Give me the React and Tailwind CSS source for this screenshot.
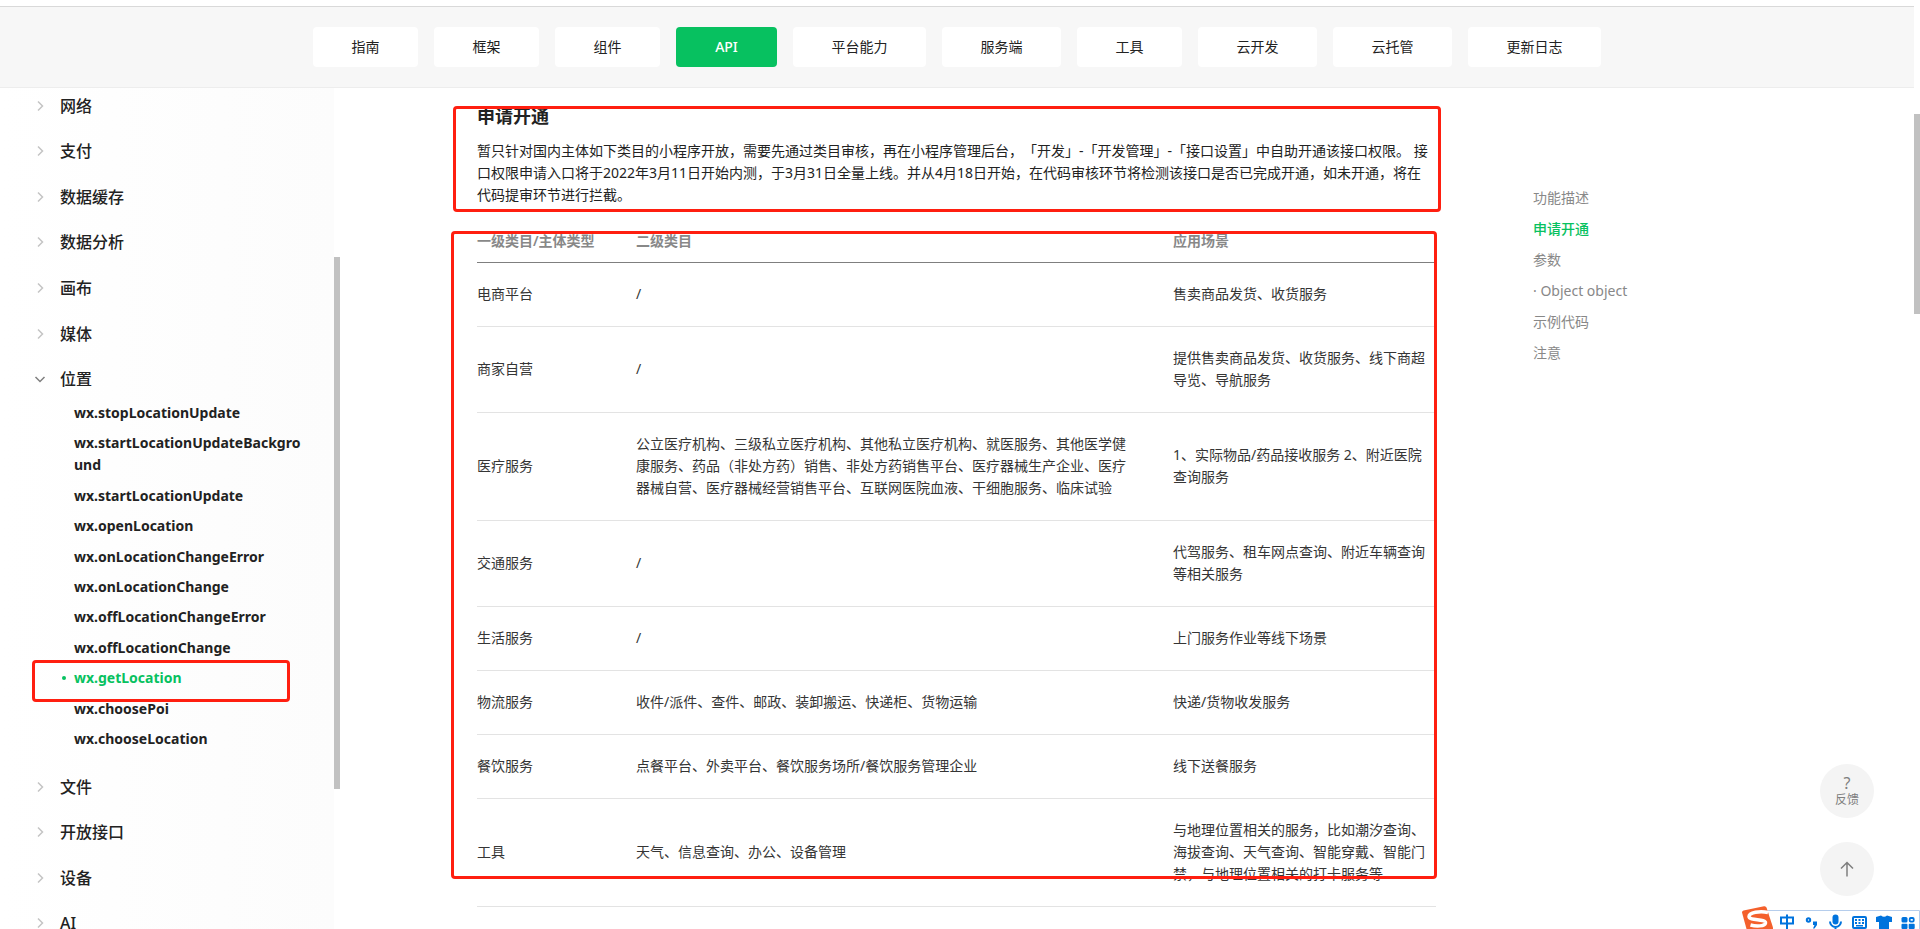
const navItems = [
  { label: '指南', width: 'w-[105px]' },
  { label: '框架', width: 'w-[105px]' },
  { label: '组件', width: 'w-[105px]' },
  { label: 'API', width: 'w-[101px]', active: true },
  { label: '平台能力', width: 'w-[133px]' },
  { label: '服务端', width: 'w-[119px]' },
  { label: '工具', width: 'w-[105px]' },
  { label: '云开发', width: 'w-[119px]' },
  { label: '云托管', width: 'w-[119px]' },
  { label: '更新日志', width: 'w-[133px]' },
];

const groupsBefore = ['网络', '支付', '数据缓存', '数据分析', '画布', '媒体', '位置'];
const groupsAfter = ['文件', '开放接口', '设备', 'AI'];

const locationApis = [
  'wx.stopLocationUpdate',
  'wx.startLocationUpdateBackground',
  'wx.startLocationUpdate',
  'wx.openLocation',
  'wx.onLocationChangeError',
  'wx.onLocationChange',
  'wx.offLocationChangeError',
  'wx.offLocationChange',
  'wx.getLocation',
  'wx.choosePoi',
  'wx.chooseLocation',
];

const rows = [
  ['电商平台', '/', '售卖商品发货、收货服务'],
  ['商家自营', '/', '提供售卖商品发货、收货服务、线下商超导览、导航服务'],
  [
    '医疗服务',
    '公立医疗机构、三级私立医疗机构、其他私立医疗机构、就医服务、其他医学健康服务、药品（非处方药）销售、非处方药销售平台、医疗器械生产企业、医疗器械自营、医疗器械经营销售平台、互联网医院血液、干细胞服务、临床试验',
    '1、实际物品/药品接收服务 2、附近医院查询服务',
  ],
  ['交通服务', '/', '代驾服务、租车网点查询、附近车辆查询等相关服务'],
  ['生活服务', '/', '上门服务作业等线下场景'],
  ['物流服务', '收件/派件、查件、邮政、装卸搬运、快递柜、货物运输', '快递/货物收发服务'],
  ['餐饮服务', '点餐平台、外卖平台、餐饮服务场所/餐饮服务管理企业', '线下送餐服务'],
  [
    '工具',
    '天气、信息查询、办公、设备管理',
    '与地理位置相关的服务，比如潮汐查询、海拔查询、天气查询、智能穿戴、智能门禁，与地理位置相关的打卡服务等',
  ],
];

const toc = ['功能描述', '申请开通', '参数', '· Object object', '示例代码', '注意'];

function Chevron({ open }) {
  return (
    <svg
      className={open ? 'h-3 w-3 rotate-90 text-[#7f7f7f]' : 'h-3 w-3 text-[#c4c4c4]'}
      viewBox="0 0 12 12"
      fill="none"
      stroke="currentColor"
      strokeWidth="1.5"
    >
      <path d="M4 1.5 8.5 6 4 10.5" />
    </svg>
  );
}

function TopNav() {
  return (
    <header className="mt-1.5 mr-1.5 flex h-[82px] shrink-0 justify-center border-t border-b border-t-[#d9d9d9] border-b-[#ededed] bg-[#f7f7f7] pt-5">
      <nav className="flex gap-4">
        {navItems.map((item) => (
          <a
            key={item.label}
            href="#"
            className={`flex h-10 items-center justify-center rounded ${item.width} ${
              item.active ? 'bg-[#07c160] font-medium text-white' : 'bg-white text-[#222]'
            }`}
          >
            {item.label}
          </a>
        ))}
      </nav>
    </header>
  );
}

function GroupLink({ label, open }) {
  return (
    <a href="#" className="flex items-center gap-[14px] text-base font-medium">
      <Chevron open={open} />
      {label}
    </a>
  );
}

function Sidebar() {
  return (
    <aside className="relative w-[340px] shrink-0 overflow-hidden">
      <div className="mr-1.5 flow-root h-full bg-linear-to-r from-white to-[#fcfcfc] pl-[34px]">
        <div className="-mt-[5px] grid h-[319px] auto-rows-fr">
          {groupsBefore.map((label) => (
            <GroupLink key={label} label={label} open={label === '位置'} />
          ))}
        </div>
        <ul className="flex h-[348px] flex-col justify-between pr-7 pl-10 font-bold">
          {locationApis.map((name) => {
            const active = name === 'wx.getLocation';
            return (
              <li key={name} className={active ? 'relative text-[#07c160]' : 'relative'}>
                {active && (
                  <>
                    <span className="absolute top-[9px] -left-3 h-1 w-1 rounded-full bg-[#07c160]" />
                    <span className="absolute -top-[7px] -left-[42px] h-[42px] w-[258px] rounded-sm border-3 border-[#ff1f10]" />
                  </>
                )}
                <a href="#" className="block break-all">
                  {name}
                </a>
              </li>
            );
          })}
        </ul>
        <div className="mt-[14px] grid h-[182px] auto-rows-fr">
          {groupsAfter.map((label) => (
            <GroupLink key={label} label={label} />
          ))}
        </div>
      </div>
      <div className="absolute top-[169px] right-0 h-[532px] w-1.5 bg-[#c1c1c1]" />
    </aside>
  );
}

function CategoryTable() {
  return (
    <table className="w-full table-fixed text-left">
      <thead>
        <tr className="border-b border-[#7f7f7f] text-[#888]">
          <th className="w-[159px] pb-[10px] font-semibold">一级类目/主体类型</th>
          <th className="w-[537px] pb-[10px] font-semibold">二级类目</th>
          <th className="pb-[10px] font-semibold">应用场景</th>
        </tr>
      </thead>
      <tbody>
        {rows.map(([first, second, scene]) => (
          <tr key={first} className="border-b border-[#e3e3e3] text-[#353535]">
            <td className="pt-5 pb-[21px]">{first}</td>
            <td className="pt-5 pr-10 pb-[21px]">{second}</td>
            <td className="pt-5 pr-2 pb-[21px]">{scene}</td>
          </tr>
        ))}
      </tbody>
    </table>
  );
}

function Article() {
  return (
    <main className="ml-[137px] w-[959px] shrink-0 pt-[15px]">
      <section className="relative">
        <h2 className="text-lg leading-[26px] font-bold">申请开通</h2>
        <p className="mt-[11px] pr-1">
          暂只针对国内主体如下类目的小程序开放，需要先通过类目审核，再在小程序管理后台，「开发」-「开发管理」-「接口设置」中自助开通该接口权限。
          接口权限申请入口将于2022年3月11日开始内测，于3月31日全量上线。并从4月18日开始，在代码审核环节将检测该接口是否已完成开通，如未开通，将在代码提审环节进行拦截。
        </p>
        <div className="absolute top-[3px] -right-[5px] -left-6 h-[106px] rounded-sm border-3 border-[#ff1f10]" />
      </section>
      <section className="relative mt-6">
        <CategoryTable />
        <div className="absolute top-px -right-px -left-[26px] h-[648px] rounded-sm border-3 border-[#ff1f10]" />
      </section>
    </main>
  );
}

function Toc() {
  return (
    <nav className="ml-[97px] flex flex-col gap-[9px] pt-[99px] text-[#888]">
      {toc.map((label) => (
        <a key={label} href="#" className={label === '申请开通' ? 'font-medium text-[#07c160]' : ''}>
          {label}
        </a>
      ))}
    </nav>
  );
}

function FloatButtons() {
  return (
    <div className="absolute right-[46px] bottom-[33px] flex flex-col gap-6 text-[#7f7f7f]">
      <button className="flex h-[54px] w-[54px] flex-col items-center justify-center rounded-full bg-[#f4f4f4] text-xs">
        <span className="text-base leading-[18px]">?</span>
        <span className="leading-4">反馈</span>
      </button>
      <button
        aria-label="返回顶部"
        className="flex h-[54px] w-[54px] items-center justify-center rounded-full bg-[#f4f4f4]"
      >
        <svg className="h-4 w-4" viewBox="0 0 16 16" fill="none" stroke="currentColor" strokeWidth="1.5">
          <path d="M8 15.5V1.5M2 7.5 8 1.5l6 6" />
        </svg>
      </button>
    </div>
  );
}

// input method status bar, cut off by the bottom of the screen
function ImeBar() {
  return (
    <div className="absolute right-0 bottom-0 h-[23px] w-[178px]">
      <svg className="h-[23px] w-[178px]" viewBox="0 0 178 23">
        <path d="M20 23V4.500H177.500V23" fill="#fff" stroke="#b5cdec" />
        <path d="M0 6.500Q0 5 1.500 4.500L22 .300Q24 0 24.600 1.800L31 21.500V23H4.500Z" fill="#f4602c" />
        <path
          d="M26 6.500C18 4.500 7 6.500 7 10.500C7 15 24 12.500 23.500 17C23 20.500 14 20.500 8.500 19"
          fill="none"
          stroke="#fff"
          strokeWidth="3.500"
        />
        <g fill="none" stroke="#0073dd" strokeWidth="2">
          <path d="M39 11.500h12v6H39zM45 8.500V23" />
          <circle cx="66.500" cy="14" r="1.700" />
          <path d="M88 15.500a5.500 5.500 0 0 0 11 0M93.500 20.500V23" />
          <rect x="111" y="11" width="13" height="11" rx="1" />
        </g>
        <g fill="#0073dd">
          <path d="M71 15.500h4V19l-2.500 3.500H71L72.500 19H71z" />
          <rect x="90.500" y="8.500" width="6" height="10" rx="3" />
          <path d="M113 13h2v2h-2zM116.500 13h2v2h-2zM120 13h2v2h-2zM113 16h2v2h-2zM116.500 16h2v2h-2zM120 16h2v2h-2zM114 19h7v1.500h-7z" />
          <path d="M134 11l5-1.500q3 2.500 6 0l5 1.500v5h-3v7h-10v-7h-3z" />
          <rect x="159.500" y="11" width="6" height="5.500" rx="1.500" />
          <rect x="159.500" y="17.800" width="6" height="5.200" rx="1" />
          <rect x="166.700" y="17.800" width="6" height="5.200" rx="1" />
        </g>
        <rect x="167.700" y="12" width="4" height="3.600" rx="1" fill="none" stroke="#0073dd" strokeWidth="1.800" />
      </svg>
    </div>
  );
}

export default function App() {
  return (
    <div className="relative flex h-screen flex-col overflow-hidden bg-white font-['Noto_Sans','Noto_Sans_CJK_SC',sans-serif] text-sm leading-[22px] text-[#222] [text-spacing-trim:space-all]">
      <TopNav />
      <div className="flex min-h-0 flex-1">
        <Sidebar />
        <Article />
        <Toc />
      </div>
      <FloatButtons />
      <ImeBar />
      <div className="absolute top-[114px] right-0 h-[200px] w-1.5 bg-[#c1c1c1]" />
    </div>
  );
}
